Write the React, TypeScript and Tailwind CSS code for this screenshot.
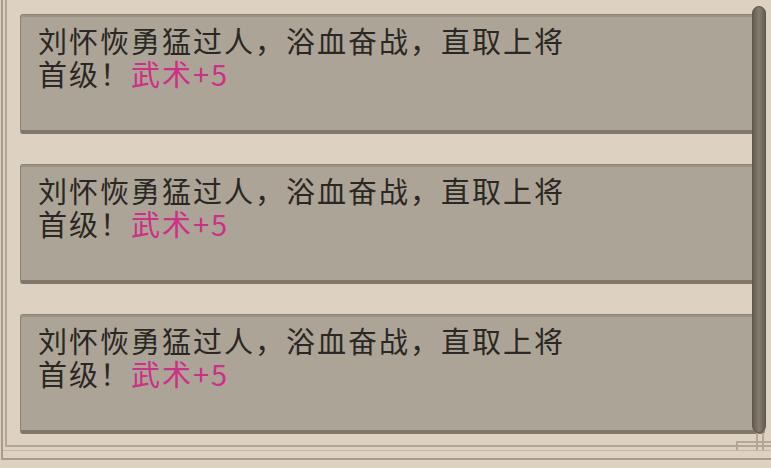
// Battle log panel: three reward entries in a parchment frame
import React from 'react';

interface LogEntry {
  text: string;
  tail: string;
  reward: string;
}

const entries: LogEntry[] = [
  { text: '刘怀恢勇猛过人，浴血奋战，直取上将', tail: '首级！', reward: '武术+5' },
  { text: '刘怀恢勇猛过人，浴血奋战，直取上将', tail: '首级！', reward: '武术+5' },
  { text: '刘怀恢勇猛过人，浴血奋战，直取上将', tail: '首级！', reward: '武术+5' },
];

export default function App() {
  return (
    <div
      className="relative w-[771px] h-[468px] overflow-hidden bg-[#ddd1c1]"
      style={{ fontFamily: '"Noto Sans CJK SC", "Noto Sans", sans-serif' }}
    >
      {/* outer frame */}
      <div className="ml-[1px] h-[460px] border-l-2 border-b-2 border-[#a89b89]">
        {/* inner frame */}
        <div className="ml-[2px] h-[447px] border-l-2 border-b-2 border-[#b2a594]">
          <div className="flex flex-col gap-[30px] pt-[14px] pl-[13px] pr-[6px]">
            {entries.map((e, i) => (
              <EntryCard key={i} entry={e} />
            ))}
          </div>
        </div>
        <div className="h-[4px] border-b border-[#c9b3a6]" />
      </div>

      {/* scrollbar */}
      <div className="absolute left-[752px] top-[6px] w-[14px] h-[427px] rounded-full border border-[#5f584c] bg-gradient-to-r from-[#655d4f] via-[#857d70] to-[#655d4f]" />

      {/* corner ornament */}
      <div className="absolute left-[736px] top-[441px] w-[35px] h-[9px] border-t-2 border-l-2 border-[#b6a794]" />
      <div className="absolute left-[756px] top-[433px] w-[8px] h-[17px] border-l-2 border-r-2 border-[#b6a794]" />
    </div>
  );
}

function EntryCard({ entry }: { entry: LogEntry }) {
  return (
    <div className="flex h-[120px] flex-col rounded-[3px] border border-[#8b8373] border-b-[4px] border-b-[#80786a] bg-[#aca496] pl-[17px] pt-[9px] text-[29px] leading-[33px] tracking-[2px] text-[#2a2824] shadow-[inset_0_2px_0_#9c9484]">
      <div>{entry.text}</div>
      <div className="flex">
        <span>{entry.tail}</span>
        <span className="text-[#cf2f86]">{entry.reward}</span>
      </div>
    </div>
  );
}
